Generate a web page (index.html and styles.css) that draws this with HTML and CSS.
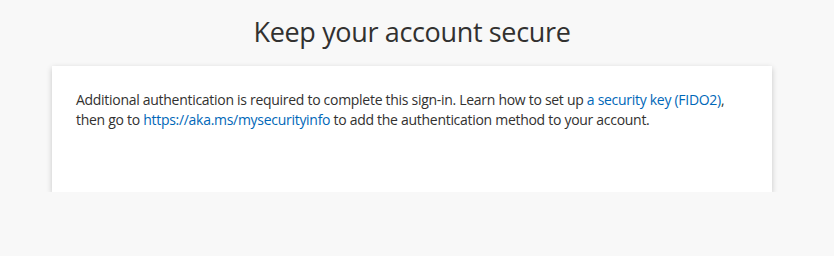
FILE: index.html
```html
<!DOCTYPE html>
<html lang="en">
<head>
<meta charset="utf-8">
<title>Keep your account secure</title>
<link rel="stylesheet" href="styles.css">
</head>
<body>
<main class="page">
  <h1 class="title">Keep your account secure</h1>
  <section class="card">
    <p class="message">Additional authentication is required to complete this sign-in. Learn how to set up <a class="link" href="#">a security key (FIDO2)</a>, then go to <a class="link" href="#">https://aka.ms/mysecurityinfo</a> to add the authentication method to your account.</p>
  </section>
</main>
</body>
</html>
```
FILE: styles.css
```css
html, body {
  margin: 0;
  padding: 0;
  background: #f8f8f8;
}
body {
  font-family: "Segoe UI", "Open Sans", "Noto Sans", sans-serif;
  color: #323130;
}
.page {
  width: 720px;
  margin-left: 52px;
  padding-top: 12px;
}
.title {
  margin: 0;
  text-align: center;
  font-size: 27px;
  letter-spacing: -0.35px;
  font-weight: 400;
  line-height: 40px;
  color: #323130;
}
.card {
  margin-top: 14px;
  background: #fff;
  box-shadow: 0 2px 6px rgba(0, 0, 0, 0.2);
  height: 126px;
  box-sizing: border-box;
  padding: 24px 24px;
}
.message {
  margin: 0;
  font-size: 14px;
  letter-spacing: -0.29px;
  line-height: 20px;
}
.link {
  color: #0067b8;
  text-decoration: none;
}
```
